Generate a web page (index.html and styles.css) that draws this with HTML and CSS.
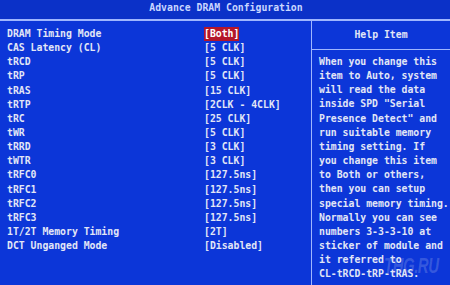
FILE: index.html
```html
<!DOCTYPE html>
<html>
<head>
<meta charset="utf-8">
<link rel="stylesheet" href="styles.css">
</head>
<body>
<div class="screen">
  <div class="titlebar">Advance DRAM Configuration</div>
  <div class="main">
    <div class="settings">
      <div class="row"><span class="label">DRAM Timing Mode</span><span class="value sel">[Both]</span></div>
      <div class="row"><span class="label">CAS Latency (CL)</span><span class="value">[5 CLK]</span></div>
      <div class="row"><span class="label">tRCD</span><span class="value">[5 CLK]</span></div>
      <div class="row"><span class="label">tRP</span><span class="value">[5 CLK]</span></div>
      <div class="row"><span class="label">tRAS</span><span class="value">[15 CLK]</span></div>
      <div class="row"><span class="label">tRTP</span><span class="value">[2CLK - 4CLK]</span></div>
      <div class="row"><span class="label">tRC</span><span class="value">[25 CLK]</span></div>
      <div class="row"><span class="label">tWR</span><span class="value">[5 CLK]</span></div>
      <div class="row"><span class="label">tRRD</span><span class="value">[3 CLK]</span></div>
      <div class="row"><span class="label">tWTR</span><span class="value">[3 CLK]</span></div>
      <div class="row"><span class="label">tRFC0</span><span class="value">[127.5ns]</span></div>
      <div class="row"><span class="label">tRFC1</span><span class="value">[127.5ns]</span></div>
      <div class="row"><span class="label">tRFC2</span><span class="value">[127.5ns]</span></div>
      <div class="row"><span class="label">tRFC3</span><span class="value">[127.5ns]</span></div>
      <div class="row"><span class="label">1T/2T Memory Timing</span><span class="value">[2T]</span></div>
      <div class="row"><span class="label">DCT Unganged Mode</span><span class="value">[Disabled]</span></div>
    </div>
    <div class="help">
      <div class="help-head">Help Item</div>
      <div class="help-body">
        <div>When you change this</div>
        <div>item to Auto, system</div>
        <div>will read the data</div>
        <div>inside SPD "Serial</div>
        <div>Presence Detect" and</div>
        <div>run suitable memory</div>
        <div>timing setting. If</div>
        <div>you change this item</div>
        <div>to Both or others,</div>
        <div>then you can setup</div>
        <div>special memory timing.</div>
        <div>Normally you can see</div>
        <div>numbers 3-3-3-10 at</div>
        <div>sticker of module and</div>
        <div>it referred to</div>
        <div>CL-tRCD-tRP-tRAS.</div>
      </div>
    </div>
  </div>
  <div class="watermark">THG.RU</div>
</div>
</body>
</html>
```
FILE: styles.css
```css
html, body {
  margin: 0;
  padding: 0;
  background: #0c34d2;
}
.screen {
  position: relative;
  width: 450px;
  height: 285px;
  overflow: hidden;
  background: #0c36d8;
  font-family: "DejaVu Sans Mono", "Liberation Mono", monospace;
  font-weight: bold;
  font-size: 9.8px;
  line-height: 14.15px;
  color: #e2e6f6;
}
.titlebar {
  box-sizing: border-box;
  height: 21px;
  line-height: 15px;
  padding-left: 2px;
  text-align: center;
  color: #c9d6ff;
  background: #0b31c8;
  border-bottom: 2px solid #9fb6ff;
}
.main {
  display: flex;
  height: 264px;
}
.settings {
  width: 312px;
  padding: 6px 0 0 7px;
  box-sizing: border-box;
  border-right: 1px solid #9fb6ff;
}
.row {
  display: flex;
  height: 14.15px;
}
.label {
  width: 197px;
  flex: none;
}
.value.sel {
  background: #b4162a;
  color: #ffffff;
}
.help {
  flex: 1;
  display: flex;
  flex-direction: column;
}
.help-head {
  height: 29px;
  line-height: 28px;
  text-align: center;
  border-bottom: 1px solid #9fb6ff;
  box-sizing: border-box;
}
.help-body {
  padding: 5px 0 0 7px;
}
.watermark {
  position: absolute;
  left: 384px;
  top: 252px;
  font-family: "Liberation Sans", sans-serif;
  font-style: italic;
  font-weight: bold;
  font-size: 15px;
  line-height: 18px;
  letter-spacing: -0.5px;
  transform: scaleY(1.5);
  transform-origin: top left;
  color: rgba(200, 210, 240, 0.22);
  pointer-events: none;
}
```
